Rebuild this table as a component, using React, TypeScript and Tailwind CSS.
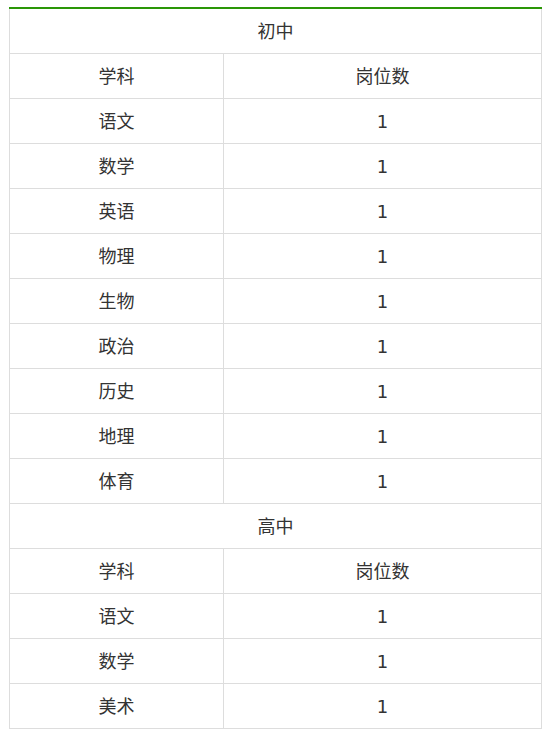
import React from 'react';

type Section = { title: string; rows: [string, string][] };

const sections: Section[] = [
  {
    title: '初中',
    rows: [
      ['语文', '1'],
      ['数学', '1'],
      ['英语', '1'],
      ['物理', '1'],
      ['生物', '1'],
      ['政治', '1'],
      ['历史', '1'],
      ['地理', '1'],
      ['体育', '1'],
    ],
  },
  {
    title: '高中',
    rows: [
      ['语文', '1'],
      ['数学', '1'],
      ['美术', '1'],
    ],
  },
];

const cell = 'border-b border-x border-[#dddddd] h-[45px] p-0 pt-[2px] text-center align-middle';

export default function App() {
  return (
    <div
      className="min-h-screen bg-white pt-[7px] pl-[9px] text-[18px] text-[#333333]"
      style={{ fontFamily: '"DejaVu Sans", "Noto Sans CJK SC", sans-serif' }}
    >
      <div className="w-[533px] border-t-2 border-[#2a9606]">
        <table className="w-full border-collapse table-fixed">
          <colgroup>
            <col className="w-[214px]" />
            <col />
          </colgroup>
          <tbody>
            {sections.map((s, si) => (
              <React.Fragment key={s.title}>
                <tr>
                  <td colSpan={2} className={si === 0 ? cell + ' !h-[44px]' : cell}>
                    {s.title}
                  </td>
                </tr>
                <tr>
                  <td className={cell}>学科</td>
                  <td className={cell}>岗位数</td>
                </tr>
                {s.rows.map(([subject, count], i) => (
                  <tr key={i}>
                    <td className={cell}>{subject}</td>
                    <td className={cell}>{count}</td>
                  </tr>
                ))}
              </React.Fragment>
            ))}
          </tbody>
        </table>
      </div>
    </div>
  );
}
